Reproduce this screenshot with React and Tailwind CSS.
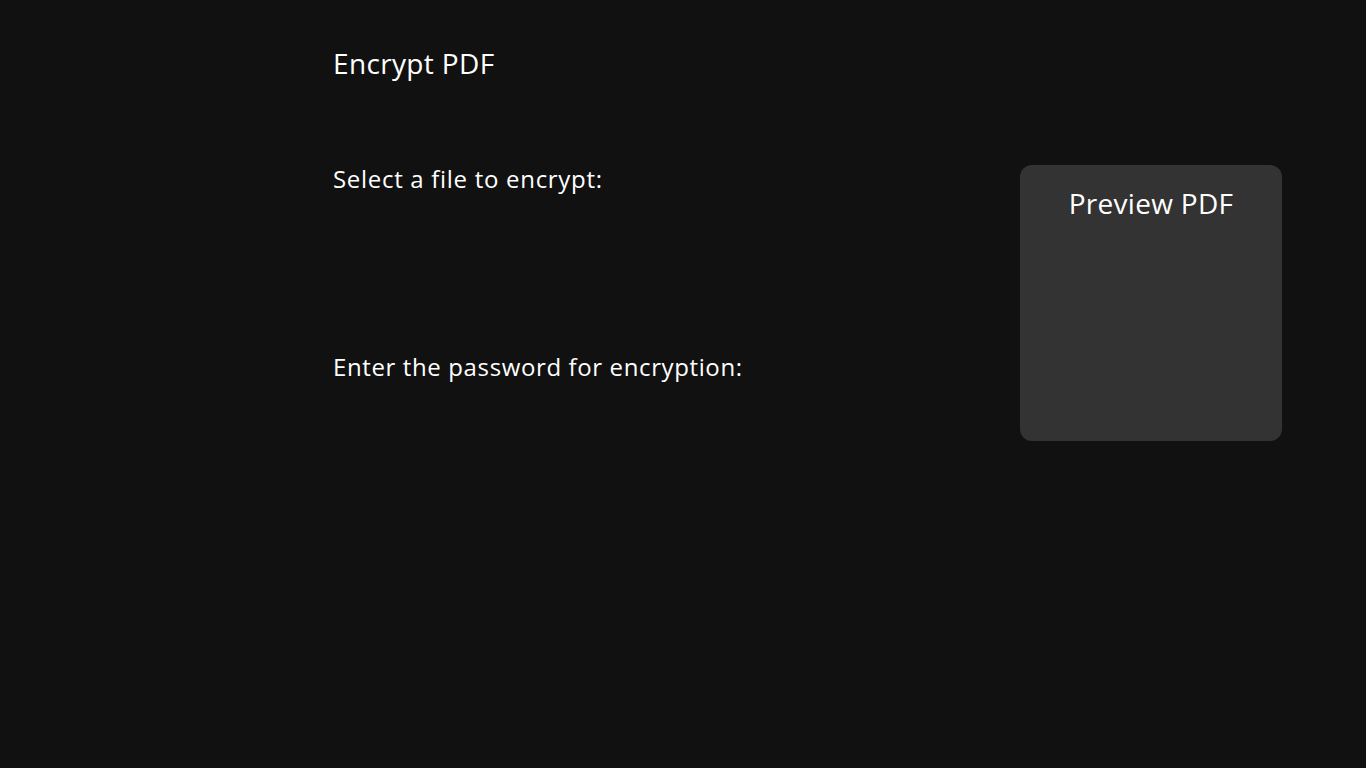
export default function App() {
  return (
    <div
      className="min-h-screen w-full bg-[#111111] text-white"
      style={{ fontFamily: '"Open Sans", "Liberation Sans", sans-serif' }}
    >
      <div className="pl-[333px] pr-[84px]">
        <h1 className="pt-[42px] text-[28px] leading-[42px] font-normal tracking-[0.35px]">Encrypt PDF</h1>

        <div className="mt-[77px] flex items-start">
          {/* Left: form labels */}
          <div className="flex-1">
            <label className="block text-[24px] leading-[36px] tracking-[0.7px]">Select a file to encrypt:</label>
            <div className="h-[152px]" />
            <label className="block text-[24px] leading-[36px] tracking-[0.62px]">Enter the password for encryption:</label>
          </div>

          {/* Right: preview panel */}
          <div className="mt-[4px] h-[276px] w-[262px] shrink-0 rounded-[12px] bg-[#333333] pt-[17px] text-center">
            <h2 className="text-[28px] leading-[42px] font-normal tracking-[0.3px]">Preview PDF</h2>
          </div>
        </div>
      </div>
    </div>
  );
}
